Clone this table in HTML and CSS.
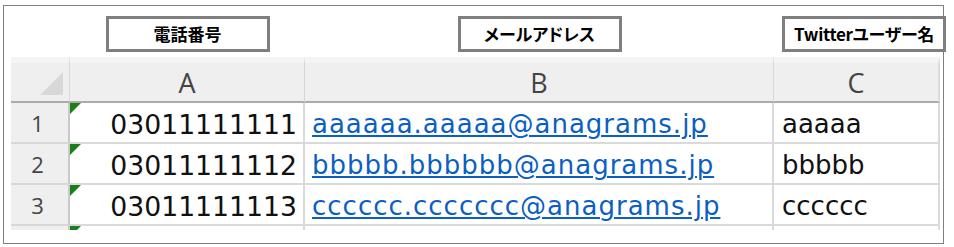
FILE: index.html
```html
<!DOCTYPE html>
<html lang="ja">
<head>
<meta charset="utf-8">
<title>連絡先一覧</title>
<link rel="stylesheet" href="styles.css">
</head>
<body>
<div class="frame">
  <div class="labels">
    <div class="spacer"></div>
    <div class="label-slot"><span class="label">電話番号</span></div>
    <div class="label-slot"><span class="label">メールアドレス</span></div>
    <div class="label-slot label-slot--end"><span class="label label--tight">Twitterユーザー名</span></div>
  </div>

  <div class="sheet">
    <div class="corner"><span class="select-all"></span></div>
    <div class="colhead">A</div>
    <div class="colhead">B</div>
    <div class="colhead colhead--last">C</div>

    <div class="rowhead">1</div>
    <div class="cell cell--num"><span class="flag"></span>03011111111</div>
    <div class="cell cell--link"><a href="#">aaaaaa.aaaaa@anagrams.jp</a></div>
    <div class="cell cell--text">aaaaa</div>

    <div class="rowhead">2</div>
    <div class="cell cell--num"><span class="flag"></span>03011111112</div>
    <div class="cell cell--link"><a href="#">bbbbb.bbbbbb@anagrams.jp</a></div>
    <div class="cell cell--text">bbbbb</div>

    <div class="rowhead">3</div>
    <div class="cell cell--num"><span class="flag"></span>03011111113</div>
    <div class="cell cell--link"><a href="#">cccccc.ccccccc@anagrams.jp</a></div>
    <div class="cell cell--text">cccccc</div>

    <div class="rowhead rowhead--cut"></div>
    <div class="cell cell--num cell--cut"><span class="flag"></span></div>
    <div class="cell cell--link cell--cut"></div>
    <div class="cell cell--text cell--cut"></div>
  </div>
</div>
</body>
</html>
```

FILE: styles.css
```css
* {
  box-sizing: border-box;
}

html, body {
  margin: 0;
  background: #ffffff;
}

body {
  width: 954px;
  height: 247px;
  overflow: hidden;
  font-family: "DejaVu Sans", "Noto Sans CJK JP", sans-serif;
}

/* outer frame around the whole figure */
.frame {
  margin: 5px 0 0 3px;
  width: 941px;
  height: 239px;
  border: 1px solid #7f7f7f;
  padding: 10px 0 0 7px;
}

/* caption boxes above the columns share the sheet's column widths */
.labels {
  display: grid;
  grid-template-columns: 59px 235px 469px 166px;
  height: 36px;
}

.label-slot {
  display: flex;
  justify-content: center;
}

.label-slot--end {
  justify-content: flex-end;
  margin-right: -6px;
}

.label {
  width: 164px;
  height: 36px;
  border: 3px solid #7f7f7f;
  display: flex;
  align-items: center;
  justify-content: center;
  font-family: "Noto Sans CJK JP", sans-serif;
  font-weight: 700;
  font-size: 17px;
  font-feature-settings: "palt";
  color: #000;
  padding-bottom: 1px;
}

.label--tight {
  letter-spacing: -0.3px;
}

/* spreadsheet grid */
.sheet {
  margin-top: 5px;
  display: grid;
  grid-template-columns: 59px 235px 469px 166px;
  grid-template-rows: 46px 41px 41px 41px 4px;
  background: #ffffff;
}

.corner,
.colhead,
.rowhead {
  background: #efefef;
}

.corner {
  border-right: 1px solid #d6d6d6;
  border-bottom: 2px solid #ababab;
  border-top: 6px solid #f4f4f4;
  position: relative;
}

.select-all {
  position: absolute;
  left: 29px;
  top: 9px;
  width: 0;
  height: 0;
  border-left: 23px solid transparent;
  border-bottom: 23px solid #d8d8d8;
}

.colhead {
  border-top: 6px solid #f4f4f4;
  border-right: 1px solid #d6d6d6;
  border-bottom: 2px solid #ababab;
  display: flex;
  align-items: center;
  justify-content: center;
  font-family: "Open Sans", sans-serif;
  font-size: 27px;
  color: #444444;
}

.colhead--last {
  border-right: 2px solid #dcdcdc;
}

.rowhead {
  border-right: 2px solid #c8c8c8;
  border-bottom: 2px solid #d8d8d8;
  display: flex;
  align-items: center;
  justify-content: center;
  font-family: "Open Sans", sans-serif;
  font-size: 22px;
  color: #444444;
  padding-right: 4px;
}

.cell {
  position: relative;
  border-right: 2px solid #dadada;
  border-bottom: 2px solid #dadada;
  display: flex;
  align-items: center;
  font-size: 26px;
  color: #111111;
  white-space: nowrap;
  padding-top: 3px;
}

.cell--num {
  justify-content: flex-end;
  padding-right: 6px;
  font-size: 26.7px;
}

.cell--link {
  padding-left: 7px;
}

.cell--link a {
  color: #0b5fc4;
  text-decoration: underline;
  text-decoration-thickness: 2px;
  text-underline-offset: 2px;
  letter-spacing: 1px;
}

.cell--text {
  padding-left: 8px;
}

/* green "number stored as text" marker */
.flag {
  position: absolute;
  left: 0;
  top: 0;
  width: 0;
  height: 0;
  border-top: 11px solid #1a7f1a;
  border-right: 11px solid transparent;
}

.cell--cut,
.rowhead--cut {
  border-bottom: 0;
  overflow: hidden;
}
```
